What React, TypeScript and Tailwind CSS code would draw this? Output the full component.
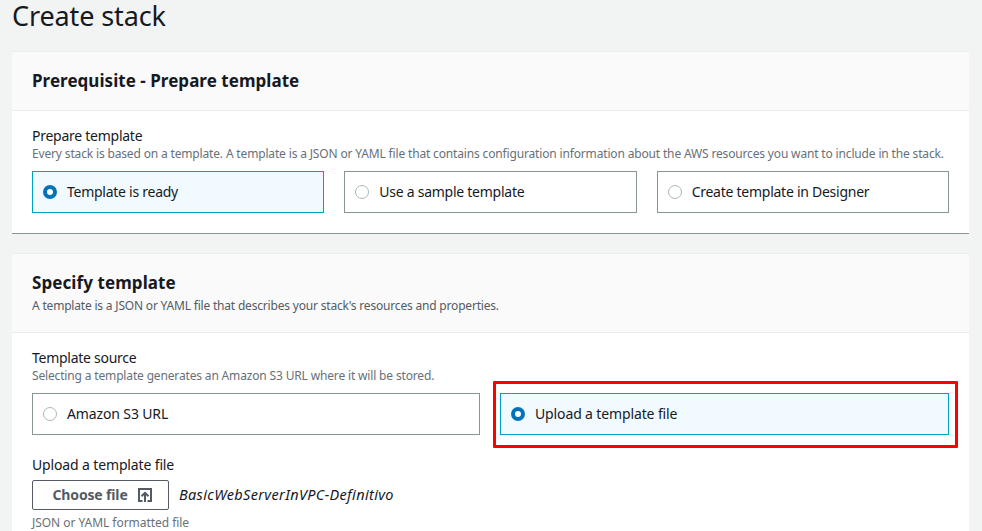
import type { ReactNode } from "react";

function Radio({ checked }: { checked?: boolean }) {
  return checked ? (
    <span className="h-3.5 w-3.5 shrink-0 rounded-full border-[4.5px] border-[#0073bb] bg-white" />
  ) : (
    <span className="h-3.5 w-3.5 shrink-0 rounded-full border border-[#aab7b8] bg-white" />
  );
}

function Tile({ checked, children }: { checked?: boolean; children: ReactNode }) {
  return (
    <div
      className={
        "flex h-[42px] items-center gap-2.5 border pl-2.5 text-sm leading-[22px] whitespace-nowrap " +
        (checked ? "border-[#00a1c9] bg-[#f1faff]" : "border-[#879596] bg-white")
      }
    >
      <Radio checked={checked} />
      {children}
    </div>
  );
}

function UploadIcon() {
  return (
    <svg width="14" height="14" viewBox="0 0 14 14" fill="none" stroke="#545b64" strokeWidth="2">
      <path d="M4.5 13H1V1h12v12H9.5" />
      <path d="M7 14V5M3.5 8.3 7 4.8l3.5 3.5" />
    </svg>
  );
}

export default function App() {
  return (
    <main className="h-[531px] overflow-hidden bg-[#f2f3f3] pr-[13px] pl-3 font-['Noto_Sans','Open_Sans',sans-serif] text-[#16191f]">
      <h1 className="h-[51px] text-[27px] leading-[32px] tracking-[-0.12px] whitespace-nowrap">
        <span>Create stack</span>
      </h1>

      <section className="h-[183px] border-t border-b border-t-[#eaeded] border-b-[#879596] bg-white">
        <header className="h-[59px] border-b border-[#eaeded] bg-[#fafafa] px-5 pt-[18px]">
          <h2 className="text-[17px] leading-[22px] font-bold tracking-[0.04px] whitespace-nowrap">
            <span>Prerequisite - Prepare template</span>
          </h2>
        </header>
        <div className="px-5 pt-3.5">
          <div className="text-sm leading-[22px] tracking-[-0.26px] whitespace-nowrap">
            <span>Prepare template</span>
          </div>
          <div className="text-xs leading-[14px] tracking-[-0.157px] whitespace-nowrap text-[#687078]">
            <span>Every stack is based on a template. A template is a JSON or YAML file that contains configuration information about the AWS resources you want to include in the stack.</span>
          </div>
          <div className="mt-2.5 grid grid-cols-3 gap-5 tracking-[-0.26px]">
            <Tile checked><span>Template is ready</span></Tile>
            <Tile><span>Use a sample template</span></Tile>
            <Tile><span>Create template in Designer</span></Tile>
          </div>
        </div>
      </section>

      <section className="mt-[19px] h-[300px] border-t border-[#eaeded] bg-white">
        <header className="h-[79px] border-b border-[#eaeded] bg-[#fafafa] px-5 pt-[18px]">
          <h2 className="text-[17px] leading-[22px] font-bold tracking-[0.08px] whitespace-nowrap">
            <span>Specify template</span>
          </h2>
          <div className="mt-[3px] text-xs leading-[18px] tracking-[-0.19px] whitespace-nowrap text-[#545b64]">
            <span>A template is a JSON or YAML file that describes your stack's resources and properties.</span>
          </div>
        </header>
        <div className="px-5 pt-3.5">
          <div className="text-sm leading-[22px] tracking-[-0.27px] whitespace-nowrap">
            <span>Template source</span>
          </div>
          <div className="text-xs leading-[14px] tracking-[-0.157px] whitespace-nowrap text-[#687078]">
            <span>Selecting a template generates an Amazon S3 URL where it will be stored.</span>
          </div>
          <div className="mt-2.5 grid grid-cols-[448px_1fr] gap-5 tracking-[-0.13px]">
            <Tile><span>Amazon S3 URL</span></Tile>
            <div className="relative">
              <Tile checked><span>Upload a template file</span></Tile>
              <div className="absolute -top-3 -right-[9px] -bottom-[13px] -left-[7px] rounded-[1px] border-[3px] border-[#ff0000]" />
            </div>
          </div>
          <div className="mt-[19px] text-sm leading-[22px] tracking-[-0.14px] whitespace-nowrap">
            <span>Upload a template file</span>
          </div>
          <div className="mt-1 flex h-[30px] items-center gap-2.5">
            <button className="flex h-[30px] w-[137px] items-center gap-2.5 rounded-xs border border-[#545b64] bg-white pl-[19.5px] text-sm font-bold tracking-[-0.15px] whitespace-nowrap text-[#545b64]">
              <span>Choose file</span>
              <UploadIcon />
            </button>
            <span className="text-[14.5px] tracking-[0.34px] italic">BasicWebServerInVPC-Definitivo</span>
          </div>
          <div className="mt-1.5 text-xs leading-[14px] tracking-[-0.04px] whitespace-nowrap text-[#687078]">
            <span>JSON or YAML formatted file</span>
          </div>
        </div>
      </section>
    </main>
  );
}
